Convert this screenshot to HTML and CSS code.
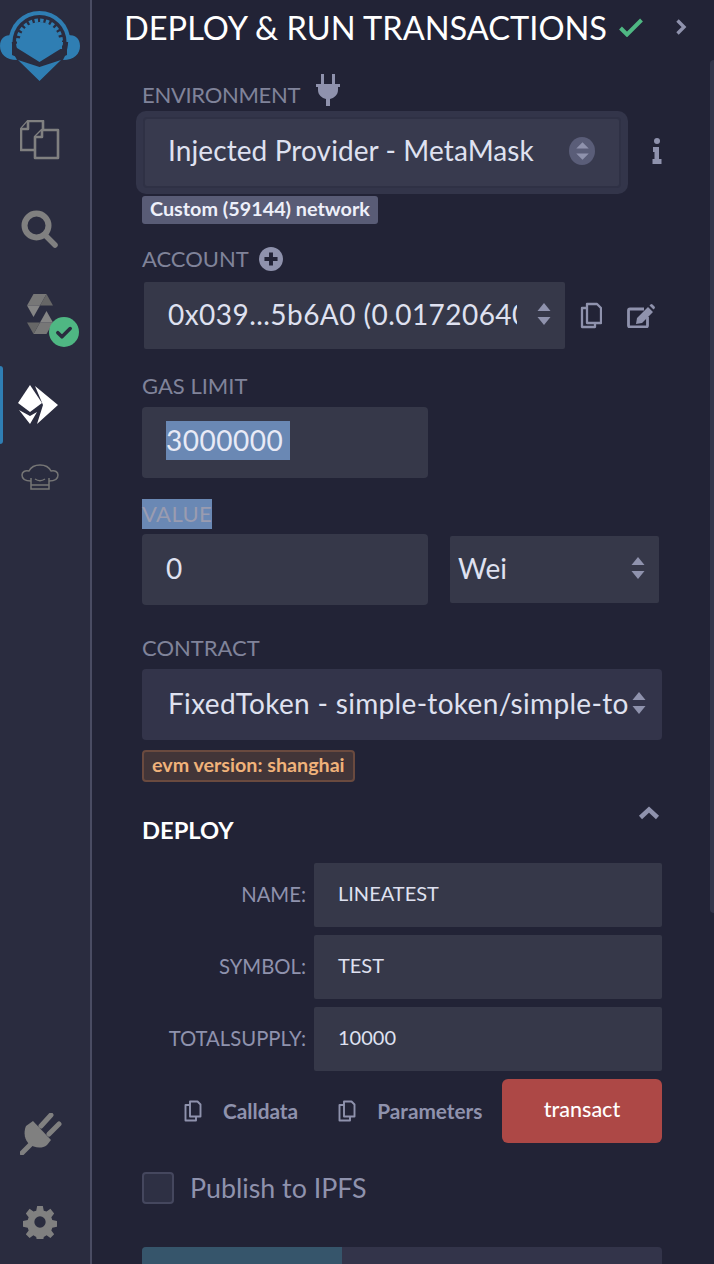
FILE: index.html
```html
<!DOCTYPE html>
<html lang="en">
<head>
<meta charset="utf-8">
<title>Deploy &amp; Run Transactions</title>
<link rel="stylesheet" href="styles.css">
</head>
<body>
<div class="app">
  <nav class="rail">
    <div class="rail-top">
      <svg class="logo" viewBox="0 0 80 82">
        <defs><clipPath id="logo-top"><rect x="0" y="0" width="80" height="49"/></clipPath></defs>
        <path fill="#2f7eb3" d="M8.500 42a31 31 0 0 1 62 0z"/>
        <path fill="#2f7eb3" d="M12 35c-7 0-12 3-12 11s6 14 17 14c-4-7-6-16-5-25zM68 35c7 0 12 3 12 11s-6 14-17 14c4-7 6-16 5-25z"/>
        <circle cx="39.500" cy="42" r="27" fill="#2a2c3f"/>
        <path fill="#2a2c3f" d="M12 44v11l27.500 12L67 55V44z"/>
        <g clip-path="url(#logo-top)"><circle cx="39.500" cy="42" r="20" fill="#2f7eb3"/><circle cx="39.500" cy="42" r="21.500" fill="none" stroke="#2f7eb3" stroke-width="4" stroke-dasharray="3.400 2.230"/></g>
        <path fill="#2f7eb3" d="M17 48l22.500 14L62 48V40H17z"/>
        <path fill="#2f7eb3" d="M18 60l21.500 7 21.500-7-21.500 21z"/>
      </svg>
      <svg class="ico files" viewBox="0 0 40 40"><g fill="#2a2c3f" stroke="#808080" stroke-width="2.600" stroke-linejoin="round"><path d="M8 1h15v29H1V9z"/><path d="M8 1v8H1"/><path d="M22 10h16v28H15V17z"/><path d="M22 10v7h-7"/></g></svg>
      <svg class="ico search" viewBox="0 0 38 38"><circle cx="15.500" cy="15.500" r="12" fill="none" stroke="#808080" stroke-width="6"/><path d="M24 25l10 10" stroke="#808080" stroke-width="5.500" stroke-linecap="round"/></svg>
      <div class="solc">
        <svg class="ico sol" viewBox="0 0 26 40"><path fill="#777" d="M19.500 0L13 11.500H0L6.500 0z"/><path fill="#666" d="M19.500 0L26 11.500H13z"/><path fill="#858585" d="M0 11.500H13L6.500 23z"/><path fill="#777" d="M6.500 40L13 28.500H26L19.500 40z"/><path fill="#666" d="M6.500 40L0 28.500H13z"/><path fill="#858585" d="M26 28.500H13L19.500 17z"/></svg>
        <span class="solc-ok"><svg viewBox="0 0 16 16"><path d="M3.500 8.500l3 3 6-6" fill="none" stroke="#2a2c3f" stroke-width="2.600" stroke-linecap="round" stroke-linejoin="round"/></svg></span>
      </div>
      <div class="active-row">
        <span class="active-bar"></span>
        <svg class="ico eth" viewBox="0 0 40 40"><path fill="#fff" d="M12 0l12 18-12 9L0 18z"/><path fill="#fff" d="M17 1l23 19-21 19 6-19z"/><path fill="#fff" d="M1 25l11 6 7-4-7 12z"/></svg>
      </div>
      <svg class="ico chef" viewBox="0 0 38 26"><path d="M10 17c-5 0-9-2-9-6 0-3 3-5 7-4 2-4 6-6 11-6s9 2 11 6c4-1 7 1 7 4 0 4-4 6-9 6" fill="none" stroke="#757575" stroke-width="1.500"/><path d="M10 14v11h18V14M10 21h18M14 15c3 2 7 2 10 0" fill="none" stroke="#757575" stroke-width="1.500"/></svg>
    </div>
    <div class="rail-bottom">
      <svg class="ico plug" viewBox="0 0 42 42"><path fill="#808080" d="M6 13c-3 7-1 14 3 18 5 4 13 5 18 1l4-5L13 8z"/><path d="M21 13L31 2M29 21L39 11M11 31L2 40" stroke="#808080" stroke-width="5" stroke-linecap="round"/></svg>
      <svg class="ico gear" viewBox="0 0 36 36"><path fill="#808080" fill-rule="evenodd" d="M15 1h6l1 5 3 1 4-3 4 5-3 4 1 3 5 1v6l-5 1-1 3 3 4-4 4-4-3-3 2-1 5h-6l-1-5-3-2-4 3-4-4 3-4-1-3-5-1v-6l5-1 1-3-3-4 4-5 4 3 3-1zM18 12a6 6 0 1 0 0 12 6 6 0 0 0 0-12z"/></svg>
    </div>
  </nav>
  <main class="panel">
    <header class="head">
      <h1 class="title">DEPLOY &amp; RUN TRANSACTIONS</h1>
      <svg class="title-check" viewBox="0 0 26 20"><path d="M2.500 11l6.500 6.500L23.500 3" fill="none" stroke="#4fb783" stroke-width="4"/></svg>
      <svg class="title-chev" viewBox="0 0 12 18"><path d="M2.500 2.500L9 9l-6.500 6.500" fill="none" stroke="#8f92ad" stroke-width="3.400"/></svg>
    </header>

    <div class="label env-label"><span class="env-text">ENVIRONMENT</span>
      <svg class="env-plug" viewBox="0 0 24 32"><path fill="#8f92ad" d="M5 0h3v10H5zM16 0h3v10h-3zM0 10h24v3h-2v3c0 5-4 8-8 9v7h-4v-7c-4-1-8-4-8-9v-3H0z"/></svg>
    </div>
    <div class="env-row">
      <div class="env-ring">
        <div class="select env-select">
          <span class="select-text env-value">Injected Provider - MetaMask</span>
          <span class="env-arrows"><svg viewBox="0 0 10 16"><path fill="#8f92ad" d="M5 1l5 5H0zM5 15l5-5H0z"/></svg></span>
        </div>
      </div>
      <svg class="info" viewBox="0 0 10 26"><circle cx="5" cy="3" r="3" fill="#8f92ad"/><path fill="#8f92ad" d="M1 9h6v12h2.500v5H.5v-5H2.500v-7H1z"/></svg>
    </div>
    <div class="net-row"><span class="net-badge">Custom (59144) network</span></div>

    <div class="label account-label">ACCOUNT
      <svg class="plus" viewBox="0 0 22 22"><circle cx="11" cy="11" r="11" fill="#8f92ad"/><path d="M11 5v12M5 11h12" stroke="#222336" stroke-width="3.600"/></svg>
    </div>
    <div class="account-row">
      <div class="select account-select">
        <span class="select-text acc-text">0x039...5b6A0 (0.01720640</span>
        <svg class="arrows" viewBox="0 0 14 24"><path fill="#8f92ad" d="M7 1l6.500 8H.5zM7 23l6.500-8H.5z"/></svg>
      </div>
      <svg class="copy-lg" viewBox="0 0 22 27"><g fill="none" stroke="#8f92ad" stroke-width="2.300" stroke-linejoin="round"><path d="M7 2h10l4 4v15H7z"/><path d="M7 6H2v19h13v-4"/></g></svg>
      <svg class="edit" viewBox="0 0 28 24"><path d="M17 5H3a1.500 1.500 0 0 0-1.500 1.500v15A1.500 1.500 0 0 0 3 23h16a1.500 1.500 0 0 0 1.500-1.500V13" fill="none" stroke="#8f92ad" stroke-width="2.800"/><path fill="#8f92ad" d="M21 3l5 5-11 11-6 1 1-6zM22.500 1.500l1-1a1.500 1.500 0 0 1 2 0l2 2a1.500 1.500 0 0 1 0 2l-1 1z"/></svg>
    </div>

    <div class="label gas-label">GAS LIMIT</div>
    <div class="field half gas-field"><span class="sel-text">3000000</span></div>

    <div class="label value-label"><span class="sel-label">VALUE</span></div>
    <div class="value-row">
      <div class="field half zero">0</div>
      <div class="select wei-select">
        <span class="select-text">Wei</span>
        <svg class="arrows" viewBox="0 0 14 24"><path fill="#8f92ad" d="M7 1l6.500 8H.5zM7 23l6.500-8H.5z"/></svg>
      </div>
    </div>

    <div class="label contract-label">CONTRACT</div>
    <div class="select contract-select">
      <span class="select-text contract-text">FixedToken - simple-token/simple-to</span>
      <svg class="arrows" viewBox="0 0 14 24"><path fill="#8f92ad" d="M7 1l6.500 8H.5zM7 23l6.500-8H.5z"/></svg>
    </div>
    <div class="evm-row"><span class="evm-badge">evm version: shanghai</span></div>

    <div class="deploy-head">
      <span class="deploy-title">DEPLOY</span>
      <svg class="deploy-chev" viewBox="0 0 22 14"><path d="M2.500 11.500L11 3.500l8.500 8" fill="none" stroke="#8f92ad" stroke-width="4.500"/></svg>
    </div>
    <div class="params">
      <div class="param"><span class="param-name">NAME:</span><div class="param-input">LINEATEST</div></div>
      <div class="param"><span class="param-name">SYMBOL:</span><div class="param-input">TEST</div></div>
      <div class="param"><span class="param-name">TOTALSUPPLY:</span><div class="param-input">10000</div></div>
    </div>
    <div class="actions">
      <svg class="copy-sm" viewBox="0 0 18 22"><g fill="none" stroke="#8f92ad" stroke-width="1.900" stroke-linejoin="round"><path d="M6 1.500h7.500l3 3v12H6z"/><path d="M6 5H1.500v15.500H12V17"/></g></svg>
      <span class="action-text">Calldata</span>
      <svg class="copy-sm" viewBox="0 0 18 22"><g fill="none" stroke="#8f92ad" stroke-width="1.900" stroke-linejoin="round"><path d="M6 1.500h7.500l3 3v12H6z"/><path d="M6 5H1.500v15.500H12V17"/></g></svg>
      <span class="action-text">Parameters</span>
      <button class="transact" type="button">transact</button>
    </div>
    <label class="publish"><span class="checkbox"></span><span class="publish-text">Publish to IPFS</span></label>
    <div class="progress"><span class="progress-fill"></span></div>
  </main>
  <span class="scrollbar"></span>
</div>
</body>
</html>
```
FILE: styles.css
```css
* { box-sizing: border-box; }
html, body { margin: 0; height: 100%; overflow: hidden; background: #222336; }
body { font-family: "Lato", "Noto Sans", sans-serif; color: #fff; }
.app { position: relative; display: flex; width: 714px; height: 1264px; overflow: hidden; }
.scrollbar { position: absolute; top: 60px; right: 0; width: 4px; height: 853px; background: #33354a; border-radius: 4px 0 0 4px; }

.rail { width: 92px; flex: none; background: #2a2c3f; border-right: 2px solid #4a4c63; display: flex; flex-direction: column; justify-content: space-between; }
.rail-top { display: flex; flex-direction: column; align-items: flex-start; }
.rail-bottom { display: flex; flex-direction: column; align-items: flex-start; padding-bottom: 25px; }
.ico { display: block; flex: none; }
.logo { width: 80px; height: 82px; display: block; }
.files { width: 40px; height: 40px; margin: 38px 0 0 20px; }
.search { width: 38px; height: 38px; margin: 50px 0 0 21px; }
.solc { position: relative; width: 60px; height: 54px; margin: 46px 0 0 27px; }
.sol { width: 26px; height: 40px; }
.solc-ok { position: absolute; left: 22px; top: 23px; width: 30px; height: 30px; border-radius: 50%; background: #4fb783; display: flex; align-items: center; justify-content: center; }
.solc-ok svg { width: 22px; height: 22px; }
.active-row { display: flex; align-items: center; margin-top: 14px; height: 86px; width: 88px; }
.active-bar { width: 3px; height: 78px; background: #2f7eb3; border-radius: 0 3px 3px 0; }
.eth { width: 40px; height: 40px; margin-left: 15px; }
.chef { width: 38px; height: 26px; margin: 16px 0 0 21px; }
.plug { width: 42px; height: 42px; margin-left: 20px; }
.gear { width: 34px; height: 34px; margin: 50px 0 0 23px; }

.panel { flex: 1; min-width: 0; padding-left: 50px; }
.head { display: flex; align-items: center; height: 58px; padding-bottom: 4px; margin-left: -18px; }
.title { margin: 0; font-size: 32.600px; font-weight: 400; white-space: nowrap; color: #fff; }
.title-check { width: 26px; height: 20px; margin-left: 11px; flex: none; }
.title-chev { width: 12px; height: 18px; margin-left: 31px; flex: none; }

.label { font-size: 22px; line-height: 28px; color: #80839a; white-space: nowrap; }
.env-label { display: flex; align-items: flex-end; gap: 16px; margin-top: 16px; height: 32px; }
.env-text { margin-bottom: -3px; letter-spacing: -.3px; }
.env-plug { width: 24px; height: 32px; }

.select, .field { display: flex; align-items: center; padding-bottom: 4px; background: #363849; font-size: 28px; color: #dfe1f0; border-radius: 4px; white-space: nowrap; }
.select-text { display: block; overflow: hidden; }
.arrows { width: 14px; height: 24px; flex: none; }

.env-row { display: flex; align-items: center; margin: 5px 0 0 -6px; }
.env-ring { width: 492px; height: 83px; padding: 6px 7px; background: #33354a; border-radius: 10px; }
.env-select { height: 71px; padding: 0 10px 6px 23px; justify-content: space-between; background: #383a4e; border: 2px solid #2f3145; }
.env-value { letter-spacing: .1px; }
.env-arrows { width: 26px; height: 28px; border-radius: 50%; background: #5a5d78; display: flex; align-items: center; justify-content: center; margin: 2px 14px 0 0; }
.env-arrows svg { width: 13px; height: 20px; }
.info { width: 10px; height: 26px; margin: 0 0 3px 24px; flex: none; }
.net-row { display: flex; margin-top: 2px; }
.net-badge { display: block; height: 28px; line-height: 24px; padding: 0 8px; background: #595c76; border-radius: 3px; font-size: 19.800px; font-weight: 700; color: #eef0fa; }

.account-label { display: flex; align-items: center; gap: 10px; margin-top: 21px; height: 28px; }
.plus { width: 24px; height: 24px; }
.account-row { display: flex; align-items: center; margin: 9px 0 0 2px; }
.account-select { width: 421px; height: 67px; padding: 0 14px 4px 24px; justify-content: space-between; border-radius: 2px; }
.acc-text { width: 349px; letter-spacing: .45px; }
.copy-lg { width: 22px; height: 27px; margin-left: 15px; flex: none; }
.edit { width: 28px; height: 24px; margin-left: 25px; flex: none; }

.gas-label { margin-top: 23px; }
.half { width: 286px; height: 71px; }
.gas-field { margin-top: 7px; padding-left: 24px; }
.sel-text { background: #6a88b4; height: 39px; line-height: 39px; padding-right: 7px; letter-spacing: .5px; color: #e8eaf6; }
.value-label { margin-top: 21px; height: 30px; }
.sel-label { display: inline-block; background: #6a88b4; height: 30px; line-height: 30px; letter-spacing: .4px; color: #9a9cb0; }
.value-row { display: flex; align-items: center; gap: 22px; margin-top: 5px; }
.zero { padding-left: 24px; }
.wei-select { width: 209px; height: 67px; padding: 0 14px 4px 8px; justify-content: space-between; border-radius: 2px; }

.contract-label { margin-top: 29px; }
.contract-select { width: 520px; height: 71px; margin-top: 7px; padding: 0 16px 4px 26px; justify-content: space-between; background: #33344a; }
.contract-text { width: 460px; letter-spacing: .32px; }
.evm-row { display: flex; margin-top: 10px; }
.evm-badge { display: block; height: 32px; line-height: 25px; padding: 0 8px; background: #423538; border: 2px solid #6a4a3f; border-radius: 4px; font-size: 19.700px; font-weight: 700; color: #f0b27a; }

.deploy-head { display: flex; justify-content: space-between; align-items: flex-start; height: 44px; width: 518px; margin-top: 24px; }
.deploy-title { font-size: 23.700px; font-weight: 700; color: #fff; margin-top: 9px; line-height: 30px; }
.deploy-chev { width: 22px; height: 14px; }
.params { display: flex; flex-direction: column; gap: 8px; margin-top: 13px; }
.param { display: flex; align-items: center; }
.param-name { width: 164px; margin-bottom: 2px; text-align: right; font-size: 20.300px; color: #8f92ad; white-space: nowrap; }
.param-input { width: 348px; height: 64px; margin-left: 8px; padding: 0 0 4px 24px; display: flex; align-items: center; background: #363849; border-radius: 2px; font-size: 20px; color: #dfe1f0; }
.actions { display: flex; align-items: center; margin-top: 8px; width: 520px; height: 64px; }
.copy-sm { width: 18px; height: 22px; margin-left: 42px; flex: none; }
.action-text + .copy-sm { margin-left: 40px; }
.action-text { font-size: 20.800px; font-weight: 700; color: #8f92ad; margin: 0 0 2px 21px; white-space: nowrap; }
.transact { width: 160px; height: 64px; margin-left: auto; border: 0; border-radius: 6px; background: #ad4846; color: #fff; font-family: inherit; font-size: 21.500px; font-weight: 500; padding: 0 0 4px; }
.publish { display: flex; align-items: center; margin-top: 29px; height: 32px; }
.checkbox { width: 32px; height: 32px; border: 2px solid #45475e; border-radius: 4px; background: #2e3044; }
.publish-text { margin-left: 16px; font-size: 26.800px; color: #8f92ad; }
.progress { width: 520px; height: 40px; margin-top: 43px; background: #33344a; border-radius: 4px 4px 0 0; overflow: hidden; }
.progress-fill { display: block; width: 200px; height: 100%; background: #36556b; }
```
